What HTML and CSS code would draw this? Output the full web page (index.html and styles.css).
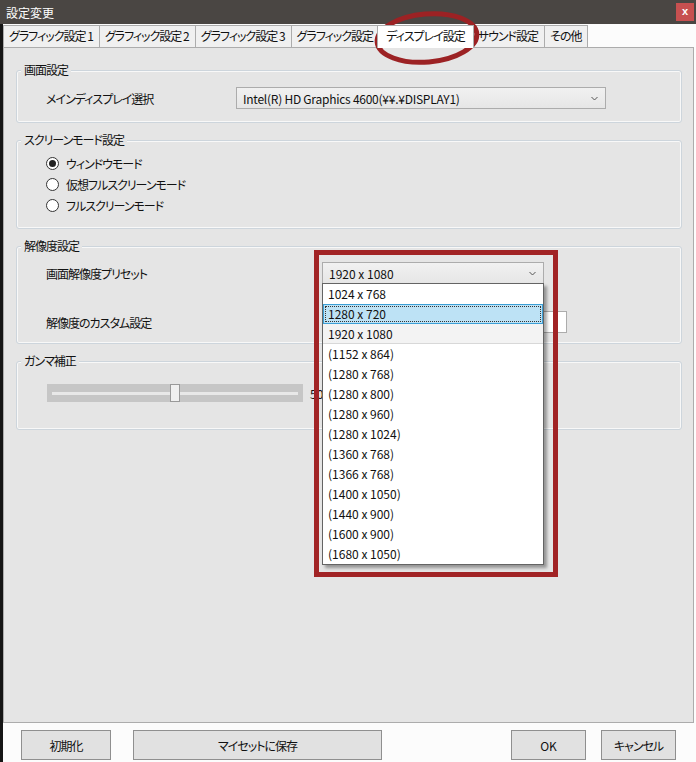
FILE: index.html
```html
<!DOCTYPE html>
<html lang="ja">
<head>
    <meta charset="UTF-8">
    <meta name="viewport" content="width=device-width, initial-scale=1.0">
    <title>設定変更</title>
    <link rel="stylesheet" href="styles.css">
</head>
<body>

    <div class="window">
        <!-- Title bar -->
        <div class="titlebar">
            <span class="title">設定変更</span>
            <span class="close">x</span>
        </div>

        <div class="client">
            <!-- Tabs -->
            <div class="tabs">
                <div class="tab">グラフィック設定 1</div>
                <div class="tab">グラフィック設定 2</div>
                <div class="tab">グラフィック設定 3</div>
                <div class="tab">グラフィック設定</div>
                <div class="tab active">ディスプレイ設定</div>
                <div class="tab">サウンド設定</div>
                <div class="tab">その他</div>
            </div>

            <!-- Tab page -->
            <div class="panel">
                <div class="group group-display">
                    <span class="group-label">画面設定</span>
                    <div class="row">
                        <span class="label">メインディスプレイ選択</span>
                        <div class="combo combo-display">
                            <span>Intel(R) HD Graphics 4600(¥¥.¥DISPLAY1)</span>
                            <svg class="chevron" width="7" height="5" viewBox="0 0 7 5"><path d="M0.5 1 L3.5 4 L6.5 1" fill="none" stroke="#555" stroke-width="1"/></svg>
                        </div>
                    </div>
                </div>

                <div class="group group-mode">
                    <span class="group-label">スクリーンモード設定</span>
                    <div class="radio-row"><span class="radio checked"></span>ウィンドウモード</div>
                    <div class="radio-row"><span class="radio"></span>仮想フルスクリーンモード</div>
                    <div class="radio-row"><span class="radio"></span>フルスクリーンモード</div>
                </div>

                <div class="group group-res">
                    <span class="group-label">解像度設定</span>
                    <div class="row">
                        <span class="label">画面解像度プリセット</span>
                        <div class="combo combo-res">
                            <span>1920 x 1080</span>
                            <svg class="chevron" width="7" height="5" viewBox="0 0 7 5"><path d="M0.5 1 L3.5 4 L6.5 1" fill="none" stroke="#555" stroke-width="1"/></svg>

                            <!-- Opened list -->
                            <div class="dropdown-list">
                                <div class="item">1024 x 768</div>
                                <div class="item selected">1280 x 720</div>
                                <div class="item current">1920 x 1080</div>
                                <div class="item">(1152 x 864)</div>
                                <div class="item">(1280 x 768)</div>
                                <div class="item">(1280 x 800)</div>
                                <div class="item">(1280 x 960)</div>
                                <div class="item">(1280 x 1024)</div>
                                <div class="item">(1360 x 768)</div>
                                <div class="item">(1366 x 768)</div>
                                <div class="item">(1400 x 1050)</div>
                                <div class="item">(1440 x 900)</div>
                                <div class="item">(1600 x 900)</div>
                                <div class="item">(1680 x 1050)</div>
                            </div>
                        </div>
                    </div>
                    <div class="row row-custom">
                        <span class="label">解像度のカスタム設定</span>
                        <div class="textbox"></div>
                    </div>
                </div>

                <div class="group group-gamma">
                    <span class="group-label">ガンマ補正</span>
                    <div class="row">
                        <div class="slider">
                            <div class="slider-track"></div>
                            <div class="slider-thumb"></div>
                        </div>
                        <span class="slider-value">50</span>
                    </div>
                </div>
            </div>

            <!-- Buttons -->
            <div class="footer">
                <button class="btn btn-reset">初期化</button>
                <button class="btn btn-save">マイセットに保存</button>
                <button class="btn btn-ok">OK</button>
                <button class="btn btn-cancel">キャンセル</button>
            </div>
        </div>

        <!-- Red annotations -->
        <svg class="mark-ellipse" width="120" height="64" viewBox="0 0 120 64">
            <ellipse cx="60" cy="32" rx="50" ry="24" fill="none" stroke="#9c2224" stroke-width="5" transform="rotate(-5 60 32)"/>
        </svg>
        <div class="mark-rect"></div>
    </div>

</body>
</html>
```

FILE: styles.css
```css
* {
    margin: 0;
    padding: 0;
    box-sizing: border-box;
}

body {
    font-family: "Noto Sans CJK JP", "Noto Sans", sans-serif;
    font-size: 12px;
    font-feature-settings: "palt";
    color: #111;
    background: #fcfcfc;
}

/* Japanese labels are set narrow like the system UI font */
.tab, .label, .group-label, .radio-row, .btn {
    letter-spacing: -1px;
}

.window {
    position: relative;
    width: 696px;
    height: 762px;
    overflow: hidden;
}

/* Title bar */
.titlebar {
    height: 24px;
    background: #4a4643;
    color: #fff;
    display: flex;
    align-items: center;
    justify-content: space-between;
    padding-left: 6px;
}

.close {
    width: 18px;
    height: 18px;
    margin-right: 2px;
    background: #c75050;
    color: #fff;
    font-family: "Liberation Sans", sans-serif;
    font-size: 11px;
    font-weight: bold;
    line-height: 17px;
    text-align: center;
}

.client {
    border-left: 3px solid #151515;
    height: 738px;
    background: #fcfcfc;
}

/* Tabs */
.tabs {
    display: flex;
    align-items: flex-end;
    height: 23px;
    padding-top: 1px;
}

.tab {
    height: 22px;
    line-height: 20px;
    padding: 0 6px 0 5px;
    background: #f0f0f0;
    border: 1px solid #acacac;
    border-bottom: none;
    margin-right: -1px;
    white-space: nowrap;
}

.tab.active {
    height: 23px;
    margin: 0 -2px -1px -2px;
    padding: 0 8px;
    background: #fff;
    position: relative;
    z-index: 1;
}

/* Tab page */
.panel {
    height: 676px;
    margin-right: 2px;
    background: #e5e5e5;
    border: 1px solid #acacac;
    padding: 22px 11px 0 12px;
}

.group {
    position: relative;
    border: 1px solid #cdd5dc;
    border-radius: 3px;
    box-shadow: inset 0 0 0 1px #f8f8f8;
    padding-left: 29px;
}

.group + .group {
    margin-top: 17px;
}

.group-label {
    position: absolute;
    top: -9px;
    left: 4px;
    padding: 0 3px;
    line-height: 16px;
    background: #e5e5e5;
}

.row {
    display: flex;
    align-items: center;
    height: 22px;
}

.group-display {
    padding-top: 16px;
    padding-bottom: 13px;
}

.group-display .label {
    width: 190px;
}

.combo {
    position: relative;
    height: 22px;
    border: 1px solid #acacac;
    background: linear-gradient(#f1f1f1, #e6e6e6);
    display: flex;
    align-items: center;
    justify-content: space-between;
    padding: 0 6px;
}

.combo-display {
    width: 370px;
    letter-spacing: -0.25px;
}

.chevron {
    margin-right: 1px;
}

/* Screen mode */
.group-mode {
    padding-top: 12px;
    padding-bottom: 13px;
}

.radio-row {
    display: flex;
    align-items: center;
    height: 20px;
    margin-bottom: 1px;
}

.radio-row:last-child {
    margin-bottom: 0;
}

.radio {
    width: 13px;
    height: 13px;
    border: 1px solid #333;
    border-radius: 50%;
    background: #fff;
    margin-right: 7px;
    display: flex;
    align-items: center;
    justify-content: center;
}

.radio.checked::after {
    content: "";
    width: 7px;
    height: 7px;
    border-radius: 50%;
    background: #222;
}

/* Resolution */
.group-res {
    padding-top: 15px;
    padding-bottom: 10px;
}

.group-res .label {
    width: 276px;
}

.combo-res {
    width: 222px;
    z-index: 2;
}

.row-custom {
    margin-top: 27px;
}

.textbox {
    width: 245px;
    height: 22px;
    background: #fff;
    border: 1px solid #acacac;
}

.dropdown-list {
    position: absolute;
    top: 100%;
    left: -1px;
    right: -1px;
    background: #fff;
    border: 1px solid #646464;
    box-shadow: 3px 3px 3px rgba(0, 0, 0, 0.35);
}

.item {
    height: 20px;
    line-height: 20px;
    padding-left: 5px;
}

.item.selected {
    background: #bde2f5;
    border: 1px solid #3c9fd6;
    outline: 1px dotted #333;
    outline-offset: -3px;
    line-height: 18px;
    padding-left: 4px;
}

.item.current {
    background: #f3f3f3;
    border-bottom: 1px solid #d8d8d8;
    line-height: 19px;
}

/* Gamma */
.group-gamma {
    padding-top: 22px;
    padding-bottom: 27px;
}

.group-gamma .row {
    height: 18px;
}

.slider {
    position: relative;
    width: 256px;
    height: 18px;
    margin-left: 1px;
    background: #c6c6c6;
    display: flex;
    align-items: center;
    padding: 0 5px;
}

.slider-track {
    flex: 1;
    height: 3px;
    background: #e8e8e8;
}

.slider-thumb {
    position: absolute;
    top: 0;
    left: 123px;
    width: 10px;
    height: 18px;
    background: #f0f0f0;
    border: 1px solid #999;
}

.slider-value {
    margin-left: 7px;
}

/* Footer buttons */
.footer {
    display: flex;
    padding: 7px 20px 0 18px;
}

.btn {
    height: 30px;
    font-family: inherit;
    font-size: 12px;
    font-feature-settings: "palt";
    color: #111;
    background: #e1e1e1;
    border: 1px solid #8f8f8f;
}

.btn-reset {
    width: 90px;
}

.btn-save {
    width: 249px;
    margin-left: 22px;
}

.btn-ok {
    width: 75px;
    margin-left: auto;
    letter-spacing: 0;
}

.btn-cancel {
    width: 75px;
    margin-left: 15px;
}

/* Red annotations */
.mark-ellipse {
    position: absolute;
    left: 367px;
    top: 6px;
}

.mark-rect {
    position: absolute;
    left: 314px;
    top: 250px;
    width: 244px;
    height: 327px;
    border: 5px solid #a12325;
}
```
